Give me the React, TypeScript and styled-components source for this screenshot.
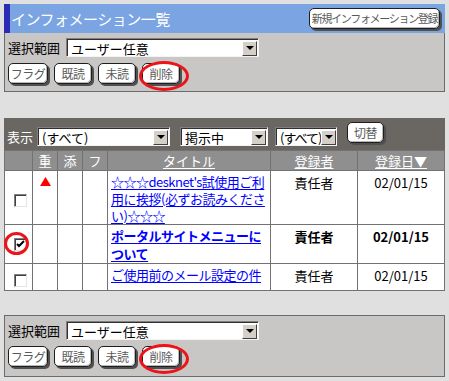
import React from "react";
import styled, { createGlobalStyle } from "styled-components";

const GlobalStyle = createGlobalStyle`
  body {
    margin: 0;
    background: #e0e0e0;
    font-family: "Noto Sans CJK JP", "Noto Sans", sans-serif;
    font-size: 13px;
    color: #000;
  }
`;

const Page = styled.div`
  padding: 4px;
  width: 441px;
`;

const TitleBar = styled.div`
  height: 29px;
  box-sizing: border-box;
  background: #7ba4e2;
  border-left: 6px solid #2b2bb3;
  display: flex;
  align-items: center;
  justify-content: space-between;
  padding: 0 5px 0 1px;
`;

const Title = styled.h1`
  margin: 0;
  font-size: 15px;
  font-weight: normal;
  letter-spacing: -0.5px;
  color: #fff;
  line-height: 1;
`;

const FormPanel = styled.div<{ $top?: boolean }>`
  background: #c9c7c5;
  border: 1px solid #6b6b6b;
  border-top: ${(p) => (p.$top ? "none" : "1px solid #6b6b6b")};
  margin-top: ${(p) => (p.$top ? 0 : 24)}px;
  padding: 5px 3px ${(p) => (p.$top ? 5 : 7)}px;
`;

const Row = styled.div<{ $gap?: number }>`
  display: flex;
  align-items: center;
  gap: ${(p) => p.$gap ?? 6}px;
`;

const ButtonRow = styled(Row)`
  margin-top: 6px;
  height: 23px;
  align-items: flex-start;
`;

const Label = styled.span<{ $light?: boolean }>`
  font-size: 13px;
  line-height: 1;
  color: ${(p) => (p.$light ? "#fff" : "#000")};
`;

const SelectBox = styled.div<{ $w: number; $tight?: boolean }>`
  width: ${(p) => p.$w}px;
  height: 19px;
  box-sizing: border-box;
  background: #fff;
  border: 1px solid;
  border-color: #808080 #f4f4f4 #f4f4f4 #808080;
  box-shadow: inset 1px 1px 0 #303030;
  display: flex;
  align-items: center;
  justify-content: space-between;
  padding: 1px 1px 0 4px;
  font-size: 13px;
  line-height: 1;
  letter-spacing: ${(p) => (p.$tight ? "-1px" : "0")};
  white-space: nowrap;
  overflow: hidden;
`;

const Arrow = styled.span`
  flex: none;
  width: 15px;
  height: 15px;
  box-sizing: border-box;
  background: #d4d0c8;
  border: 1px solid;
  border-color: #fff #404040 #404040 #fff;
  display: flex;
  align-items: center;
  justify-content: center;
  &::after {
    content: "";
    border-left: 4px solid transparent;
    border-right: 4px solid transparent;
    border-top: 4px solid #000;
  }
`;

const Btn = styled.button<{ $w: number; $small?: boolean }>`
  width: ${(p) => p.$w}px;
  height: 21px;
  padding: 0;
  box-sizing: border-box;
  font-family: "Noto Sans CJK JP", sans-serif;
  font-size: ${(p) => (p.$small ? 11 : 12)}px;
  letter-spacing: ${(p) => (p.$small ? "-1.3px" : "-0.5px")};
  line-height: 1;
  color: #5a5a5a;
  background: #fff;
  border: 1px solid #1e1e1e;
  border-radius: 5px;
  box-shadow: inset -1px -1px 0 #b8b8b8, 2px 2px 0 #505050;
  white-space: nowrap;
  overflow: hidden;
`;

const Circled = styled.span<{ $l: number; $t: number; $w: number; $h: number }>`
  position: relative;
  display: inline-flex;
  &::after {
    content: "";
    position: absolute;
    left: ${(p) => p.$l}px;
    top: ${(p) => p.$t}px;
    width: ${(p) => p.$w}px;
    height: ${(p) => p.$h}px;
    box-sizing: border-box;
    border: 3px solid #ec1418;
    border-radius: 50%;
    pointer-events: none;
  }
`;

const ListPanel = styled.div`
  margin-top: 26px;
  background: #6a6662;
`;

const FilterRow = styled.div`
  height: 32px;
  display: flex;
  align-items: flex-start;
  padding-left: 3px;
  & > * {
    margin-top: 9px;
  }
  & > button {
    margin-top: 4px;
  }
`;

const Spacer = styled.span<{ $w: number }>`
  width: ${(p) => p.$w}px;
`;

const ListTable = styled.table`
  width: 100%;
  table-layout: fixed;
  border-collapse: separate;
  border-spacing: 1px;
  background: #727272;
`;

const Th = styled.th<{ $link?: boolean }>`
  height: 19px;
  padding: 0;
  background: #8f8f8f;
  color: #fff;
  font-weight: normal;
  font-size: 13px;
  line-height: 1;
  text-decoration: ${(p) => (p.$link ? "underline" : "none")};
  text-underline-offset: 2px;
`;

const Td = styled.td<{ $bold?: boolean; $middle?: boolean; $left?: boolean }>`
  background: #fff;
  padding: ${(p) => (p.$left ? "2px 2px 0 3px" : "3px 0 0")};
  vertical-align: ${(p) => (p.$middle ? "middle" : "top")};
  text-align: ${(p) => (p.$left ? "left" : "center")};
  font-weight: ${(p) => (p.$bold ? "bold" : "normal")};
  font-size: 13px;
  line-height: 17px;
`;

const TitleLink = styled.a<{ $bold?: boolean }>`
  display: block;
  color: #0000ff;
  text-decoration: underline;
  text-underline-offset: 2px;
  letter-spacing: -0.5px;
  font-weight: ${(p) => (p.$bold ? "bold" : "normal")};
  line-height: ${(p) => (p.$bold ? 18 : 17)}px;
`;

const CheckBox = styled.span`
  display: inline-block;
  vertical-align: middle;
  width: 13px;
  height: 13px;
  box-sizing: border-box;
  border: 1px solid;
  border-color: #808080 #e4e4e4 #e4e4e4 #808080;
  box-shadow: inset 1px 1px 0 #404040;
  background: #fff;
  margin-left: 3px;
  position: relative;
  svg {
    position: absolute;
    left: 1px;
    top: 1px;
  }
`;

const Mark = styled.svg`
  display: block;
  margin: 3px auto 0;
`;

type Item = {
  title: React.ReactNode;
  owner: string;
  date: string;
  important?: boolean;
  checked?: boolean;
  bold?: boolean;
  height: number;
};

const items: Item[] = [
  {
    title: (
      <>
        ☆☆☆desknet's試使用ご利
        <br />
        用に挨拶(必ずお読みくださ
        <br />
        い)☆☆☆
      </>
    ),
    owner: "責任者",
    date: "02/01/15",
    important: true,
    height: 53,
  },
  {
    title: (
      <>
        ポータルサイトメニューに
        <br />
        ついて
      </>
    ),
    owner: "責任者",
    date: "02/01/15",
    checked: true,
    bold: true,
    height: 38,
  },
  { title: "ご使用前のメール設定の件", owner: "責任者", date: "02/01/15", height: 26 },
];

const Select = ({ value, w, tight }: { value: string; w: number; tight?: boolean }) => (
  <SelectBox $w={w} $tight={tight}>
    <span>{value}</span>
    <Arrow />
  </SelectBox>
);

const Check = ({ checked }: { checked?: boolean }) => (
  <CheckBox>
    {checked && (
      <svg width="9" height="9" viewBox="0 0 9 9">
        <path d="M1 4 L3 6 L8 1" stroke="#000" strokeWidth="2" fill="none" />
      </svg>
    )}
  </CheckBox>
);

const Actions = () => (
  <>
    <Row>
      <Label>選択範囲</Label>
      <Select value="ユーザー任意" w={193} />
    </Row>
    <ButtonRow $gap={6}>
      <Btn $w={40}>フラグ</Btn>
      <Btn $w={38}>既読</Btn>
      <Btn $w={38}>未読</Btn>
      <Circled $l={-3} $t={-2} $w={50} $h={30}>
        <Btn $w={38}>削除</Btn>
      </Circled>
    </ButtonRow>
  </>
);

export default function App() {
  return (
    <Page>
      <GlobalStyle />
      <TitleBar>
        <Title>インフォメーション一覧</Title>
        <Btn $w={131} $small>
          新規インフォメーション登録
        </Btn>
      </TitleBar>
      <FormPanel $top>
        <Actions />
      </FormPanel>

      <ListPanel>
        <FilterRow>
          <Label $light style={{ marginTop: 12, marginRight: 4 }}>
            表示
          </Label>
          <Select value="(すべて)" w={133} />
          <Spacer $w={10} />
          <Select value="掲示中" w={88} />
          <Spacer $w={7} />
          <Select value="(すべて)" w={62} tight />
          <Spacer $w={10} />
          <Btn $w={37}>切替</Btn>
        </FilterRow>
        <ListTable>
          <colgroup>
            <col style={{ width: 27 }} />
            <col style={{ width: 24 }} />
            <col style={{ width: 24 }} />
            <col style={{ width: 24 }} />
            <col style={{ width: 162 }} />
            <col style={{ width: 86 }} />
            <col style={{ width: 86 }} />
          </colgroup>
          <thead>
            <tr>
              <Th />
              <Th>重</Th>
              <Th>添</Th>
              <Th>フ</Th>
              <Th $link>タイトル</Th>
              <Th $link>登録者</Th>
              <Th $link>登録日▼</Th>
            </tr>
          </thead>
          <tbody>
            {items.map((it, i) => (
              <tr key={i} style={{ height: it.height }}>
                <Td $middle>
                  {it.checked ? (
                    <Circled $l={-7} $t={-6} $w={25} $h={23}>
                      <Check checked />
                    </Circled>
                  ) : (
                    <Check />
                  )}
                </Td>
                <Td>
                  {it.important && (
                    <Mark width="11" height="9" viewBox="0 0 11 9">
                      <path d="M5.5 0 L11 9 L0 9 Z" fill="#f00" />
                    </Mark>
                  )}
                </Td>
                <Td />
                <Td />
                <Td $left>
                  <TitleLink href="#" $bold={it.bold}>
                    {it.title}
                  </TitleLink>
                </Td>
                <Td $bold={it.bold}>{it.owner}</Td>
                <Td $bold={it.bold}>{it.date}</Td>
              </tr>
            ))}
          </tbody>
        </ListTable>
      </ListPanel>

      <FormPanel>
        <Actions />
      </FormPanel>
    </Page>
  );
}
